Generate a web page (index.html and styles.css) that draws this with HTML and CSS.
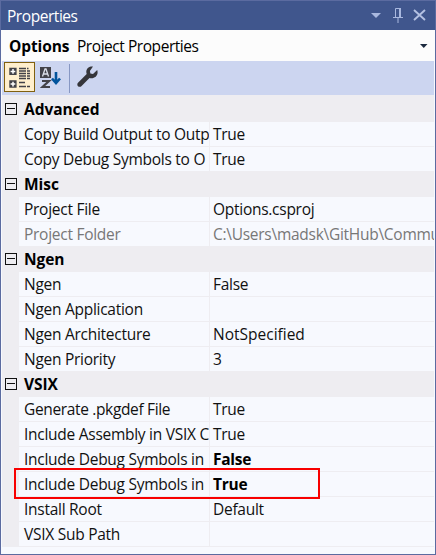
FILE: index.html
```
<!DOCTYPE html>
<html lang="en">
<head>
<meta charset="utf-8">
<title>Properties</title>
<link rel="stylesheet" href="styles.css">
</head>
<body>
<div class="panel">
  <header class="titlebar">
    <span class="title">Properties</span>
    <svg class="window-icons" width="58" height="18" viewBox="0 0 58 18">
      <path d="M0 6h10L5 11z" fill="#a9b8df"/>
      <g fill="none" stroke="#a9b8df"><path d="M24.5 10V1.500h5V10M22 10.500h10M27 11v5"/><path d="M29 1v9" stroke-width="2"/></g>
      <path d="M43 3l11 10M54 3L43 13" fill="none" stroke="#b4c1e2" stroke-width="1.900"/>
    </svg>
  </header>
  <div class="selector">
    <b class="object">Options</b><span class="kind">Project Properties</span>
    <svg class="arrow" width="8" height="4" viewBox="0 0 8 4"><path d="M0 0h7.500L3.750 4z" fill="#1b293e"/></svg>
  </div>
  <div class="toolbar">
    <span class="tool selected">
      <svg width="21" height="22" viewBox="0 0 21 22">
        <path d="M.3.700h7.300V8H.3zM.3 13.300h7.300v7.400H.3z" fill="#424248"/>
        <path d="M4 2v4.700M1.600 4.400h4.700M4 14.700v4.700M1.600 17h4.700" stroke="#fff" stroke-width="1.500"/>
        <path d="M10 1.500h7M18 1.500h1.500M10 4h7M18 4h3M10 6.500h7M18 6.500h3M10 9h7M18 9h3M10 11.500h7M18 11.500h3M10 15.500h6M10 19.500h7M18 19.500h3" stroke="#424248" stroke-width="1.300"/>
      </svg>
    </span>
    <svg class="sort" width="21" height="22" viewBox="0 0 21 22">
      <path d="M0 0h11v11H0z" fill="#424248"/>
      <path d="M2.500 9.500L5 2h1l2.500 7.500M3.500 7h4" fill="none" stroke="#dce0e9" stroke-width="1.300"/>
      <path d="M2 14h7L2.500 20H10" fill="none" stroke="#424248" stroke-width="2.200"/>
      <path d="M16 5v11M12 11.500l4 4.500 4-4.500" fill="none" stroke="#00539c" stroke-width="2.600"/>
    </svg>
    <span class="separator"></span>
    <svg class="wrench" width="22" height="22" viewBox="0 0 22 22">
      <path d="M16 .6C13 0 9.500 2 9.300 5.500c0 1 .1 1.700.4 2.600L1 16.700c-1.300 1.400-.6 3.500 1 4 .9.300 1.900 0 2.600-.8L12.500 12c4 1.200 8-1.500 8.100-5.500 0-.9-.1-1.700-.4-2.500L16 8.100l-2.600-.5-.5-2.700z" fill="#35353a"/>
    </svg>
  </div>
  <main class="grid">
    <div class="category"><i class="toggle"></i><span>Advanced</span></div>
    <div class="row"><div class="name">Copy Build Output to Outp</div><div class="value">True</div></div>
    <div class="row"><div class="name">Copy Debug Symbols to O</div><div class="value">True</div></div>
    <div class="category"><i class="toggle"></i><span>Misc</span></div>
    <div class="row"><div class="name">Project File</div><div class="value">Options.csproj</div></div>
    <div class="row readonly"><div class="name">Project Folder</div><div class="value">C:\Users\madsk\GitHub\Commu</div></div>
    <div class="category"><i class="toggle"></i><span>Ngen</span></div>
    <div class="row"><div class="name">Ngen</div><div class="value">False</div></div>
    <div class="row"><div class="name">Ngen Application</div><div class="value"></div></div>
    <div class="row"><div class="name">Ngen Architecture</div><div class="value wide">NotSpecified</div></div>
    <div class="row"><div class="name">Ngen Priority</div><div class="value">3</div></div>
    <div class="category"><i class="toggle"></i><span>VSIX</span></div>
    <div class="row"><div class="name tight">Generate .pkgdef File</div><div class="value">True</div></div>
    <div class="row"><div class="name">Include Assembly in VSIX C</div><div class="value">True</div></div>
    <div class="row changed"><div class="name">Include Debug Symbols in</div><div class="value">False</div></div>
    <div class="row changed marked"><div class="name">Include Debug Symbols in</div><div class="value">True</div></div>
    <div class="row"><div class="name">Install Root</div><div class="value">Default</div></div>
    <div class="row"><div class="name">VSIX Sub Path</div><div class="value"></div></div>
  </main>
</div>
</body>
</html>
```
FILE: styles.css
```
*, *::after { box-sizing: border-box; }
body { margin: 0; font: 15.5px/24px "Open Sans", "Noto Sans", sans-serif; letter-spacing: -.27px; color: #111; }
.panel { width: 436px; height: 555px; border: 1px solid #5b6ba0; background: #f7f9fe; display: flex; flex-direction: column; overflow: hidden; white-space: nowrap; }
.titlebar { height: 29px; flex: none; background: #40568d; color: #fff; display: flex; justify-content: space-between; align-items: center; padding: 1px 6px 0 6px; }
.title { letter-spacing: -.45px; }
.window-icons { margin-top: -1px; }
.selector { height: 31px; flex: none; background: #fcfcfc; color: #000; display: flex; align-items: center; padding: 0 7px 0 8px; }
.object { width: 68px; letter-spacing: -.1px; }
.kind { letter-spacing: -.45px; }
.arrow { margin-left: auto; }
.toolbar { height: 34px; flex: none; margin: 0 1px; background: #ccd5f0; display: flex; align-items: flex-start; padding-top: 1px; }
.tool { width: 31px; height: 30px; margin-left: 2px; padding: 4px 0 0 4px; border: 1px solid #80600f; background: #ffefcd; line-height: 0; }
.sort { margin: 5px 0 0 5px; }
.separator { width: 1px; height: 29px; background: #8797c3; margin: 2px 7px 0 8px; }
.wrench { margin-top: 4px; }
.grid { margin: 0 1px; padding-top: 2px; background: #eeedf1; height: 452px; }
.category { height: 25px; display: flex; align-items: center; padding-bottom: 1px; font-weight: 700; letter-spacing: -.05px; color: #000; }
.toggle { width: 12px; height: 12px; border: 1px solid #111; margin: 0 7px 1px 3px; display: flex; align-items: center; justify-content: center; }
.toggle::after { content: ""; width: 8px; height: 1px; background: #111; }
.row { height: 25px; padding: 0 0 1px 17px; display: grid; grid-template: 24px / 190px 1fr; column-gap: 1px; position: relative; }
.name, .value { background: #f7f9fe; overflow: hidden; min-width: 0; }
.name { padding-left: 5px; }
.value { padding-left: 3px; }
.tight { letter-spacing: -.35px; }
.wide { letter-spacing: 0; }
.readonly { color: #777; }
.changed .value { font-weight: 700; color: #000; }
.marked::after { content: ""; position: absolute; z-index: 1; left: 12px; top: -4px; width: 306px; height: 31px; border: 2px solid #f80000; }
```
